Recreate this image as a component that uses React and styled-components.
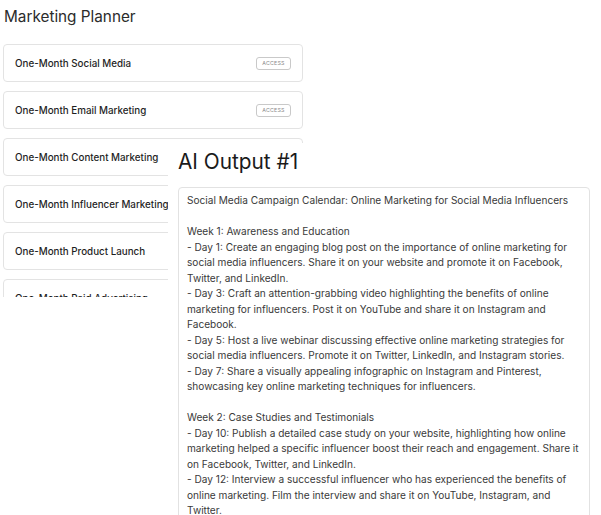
import React from "react";
import styled, { createGlobalStyle } from "styled-components";

const GlobalStyle = createGlobalStyle`
  body {
    margin: 0;
    background: #fff;
    font-family: Inter, "Noto Sans", sans-serif;
  }
`;

const plans = [
  { name: "One-Month Social Media", access: true },
  { name: "One-Month Email Marketing", access: true },
  { name: "One-Month Content Marketing" },
  { name: "One-Month Influencer Marketing" },
  { name: "One-Month Product Launch" },
  { name: "One-Month Paid Advertising" },
];

const output = `Social Media Campaign Calendar: Online Marketing for Social Media Influencers

Week 1: Awareness and Education
- Day 1: Create an engaging blog post on the importance of online marketing for social media influencers. Share it on your website and promote it on Facebook, Twitter, and LinkedIn.
- Day 3: Craft an attention-grabbing video highlighting the benefits of online marketing for influencers. Post it on YouTube and share it on Instagram and Facebook.
- Day 5: Host a live webinar discussing effective online marketing strategies for social media influencers. Promote it on Twitter, LinkedIn, and Instagram stories.
- Day 7: Share a visually appealing infographic on Instagram and Pinterest, showcasing key online marketing techniques for influencers.

Week 2: Case Studies and Testimonials
- Day 10: Publish a detailed case study on your website, highlighting how online marketing helped a specific influencer boost their reach and engagement. Share it on Facebook, Twitter, and LinkedIn.
- Day 12: Interview a successful influencer who has experienced the benefits of online marketing. Film the interview and share it on YouTube, Instagram, and Twitter.
- Day 14: Share testimonials from influencers on your social media channels.`;

const App = () => {
  return (
    <Page>
      <GlobalStyle />
      <Sidebar>
        <Title>Marketing Planner</Title>
        <CardList>
          {plans.map((p) => (
            <Card key={p.name}>
              <CardName>{p.name}</CardName>
              {p.access && <AccessButton>ACCESS</AccessButton>}
            </Card>
          ))}
        </CardList>
      </Sidebar>
      <OutputPanel>
        <OutputTitle>AI Output #1</OutputTitle>
        <OutputBox>{output}</OutputBox>
      </OutputPanel>
    </Page>
  );
};

const Page = styled.div`
  position: relative;
  width: 601px;
  height: 515px;
  overflow: hidden;
`;

const Sidebar = styled.div`
  width: 300px;
  padding: 7px 0 0 3px;
  display: flex;
  flex-direction: column;
`;

const Title = styled.h1`
  margin: 0 0 17px 1px;
  font-size: 15.3px;
  line-height: 20px;
  font-weight: 400;
  color: #2b2b2b;
`;

const CardList = styled.div`
  display: flex;
  flex-direction: column;
  gap: 9px;
  height: 253px;
  overflow: hidden;
`;

const Card = styled.div`
  flex: none;
  height: 38px;
  box-sizing: border-box;
  border: 1px solid #e3e3e3;
  border-radius: 4px;
  padding: 0 11px;
  display: flex;
  align-items: center;
  justify-content: space-between;
`;

const CardName = styled.span`
  font-size: 9.8px;
  font-weight: 500;
  color: #1f1f1f;
`;

const AccessButton = styled.span`
  width: 35px;
  height: 13px;
  box-sizing: border-box;
  border: 1px solid #c9c9c9;
  border-radius: 3px;
  font-size: 5.3px;
  letter-spacing: 0.2px;
  color: #8a8a8a;
  display: flex;
  align-items: center;
  justify-content: center;
`;

const OutputPanel = styled.div`
  position: absolute;
  left: 168px;
  top: 143px;
  right: 0;
  bottom: 0;
  background: #fff;
  padding: 6px 11px 0 10px;
`;

const OutputTitle = styled.h2`
  margin: 0 0 12px;
  font-size: 20.8px;
  line-height: 26px;
  font-weight: 400;
  color: #1a1a1a;
`;

const OutputBox = styled.div`
  border: 1px solid #e2e2e2;
  border-radius: 4px;
  padding: 5px 8px;
  font-size: 10.1px;
  line-height: 15.5px;
  color: #3a3a3a;
  white-space: pre-wrap;
`;

export default App;
